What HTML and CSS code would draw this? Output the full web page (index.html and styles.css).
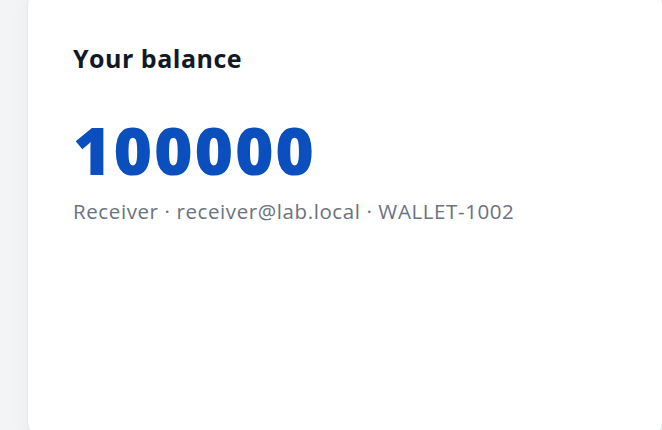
FILE: index.html
```html
<!DOCTYPE html>
<html>
<head>
<meta charset="utf-8">
<link rel="stylesheet" href="styles.css">
</head>
<body>
<div class="page">
  <section class="card">
    <h2 class="title">Your balance</h2>
    <div class="amount">100000</div>
    <p class="meta">Receiver · receiver@lab.local · WALLET-1002</p>
  </section>
</div>
</body>
</html>
```
FILE: styles.css
```css
html, body {
  margin: 0;
  padding: 0;
  background: #f3f4f6;
  overflow: hidden;
}
.page {
  width: 662px;
  height: 430px;
  overflow: hidden;
  padding-left: 28px;
  box-sizing: border-box;
}
.card {
  margin-top: -10px;
  width: 634px;
  height: 448px;
  background: #ffffff;
  border-radius: 16px;
  box-shadow: 0 1px 3px rgba(15, 23, 42, 0.08), 0 6px 20px rgba(15, 23, 42, 0.05);
  padding: 52px 45px 0;
  box-sizing: border-box;
  font-family: "Open Sans", "Noto Sans", Arial, sans-serif;
}
.title {
  margin: 0;
  font-size: 25px;
  line-height: 32px;
  font-weight: 700;
  letter-spacing: 0.5px;
  color: #111827;
}
.amount {
  margin-top: 35px;
  font-size: 66px;
  line-height: 80px;
  font-weight: 800;
  color: #0b4fbf;
  letter-spacing: 1.8px;
}
.meta {
  margin: 8px 0 0;
  font-size: 20.5px;
  line-height: 28px;
  letter-spacing: 0.6px;
  color: #6b7280;
}
```
